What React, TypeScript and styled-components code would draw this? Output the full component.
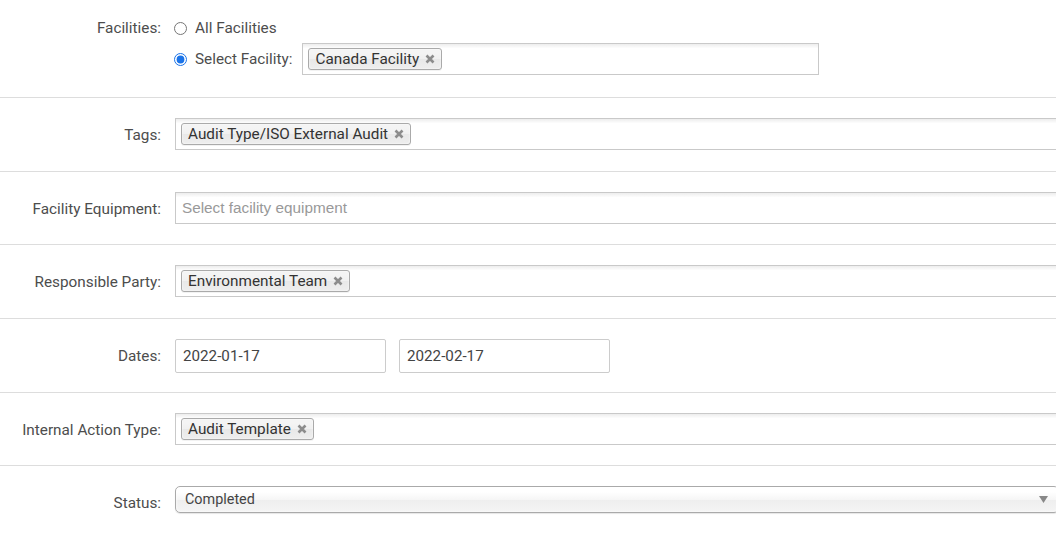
import React from "react";
import styled, { createGlobalStyle } from "styled-components";

const Global = createGlobalStyle`
  html, body { margin: 0; padding: 0; overflow: hidden; background: #fff; }
  body { font-family: Roboto, "Liberation Sans", Arial, sans-serif; }
`;

const Page = styled.div`
  width: 1056px;
  display: flex;
  flex-direction: column;
`;

const Row = styled.div<{ $first?: boolean; $last?: boolean }>`
  box-sizing: border-box;
  height: ${(p) => (p.$first ? "98px" : "73.7px")};
  padding-top: ${(p) => (p.$first ? "18px" : "20px")};
  display: grid;
  grid-template-columns: 161px 1fr;
  column-gap: 14px;
  align-items: start;
  border-bottom: ${(p) => (p.$last ? "none" : "1px solid #dddddd")};
`;

const Label = styled.div<{ $lh?: number }>`
  text-align: right;
  font-size: 15.3px;
  color: #4d4d4d;
  line-height: ${(p) => p.$lh ?? 32}px;
  padding-top: ${(p) => (p.$lh ? 0 : 1)}px;
  white-space: nowrap;
`;

const Control = styled.div`
  min-width: 0;
  display: flex;
  flex-direction: column;
  gap: 5px;
`;

const RadioLine = styled.label<{ $h: number }>`
  display: flex;
  align-items: center;
  height: ${(p) => p.$h}px;
  gap: 8px;
  font-size: 15.3px;
  color: #4d4d4d;
  white-space: nowrap;
`;

const Radio = styled.input`
  margin: 0 0 0 -1px;
  width: 13px;
  height: 13px;
  accent-color: #1a73e8;
`;

const SelectFacilityText = styled.span`
  margin-right: 2px;
`;

const MultiBox = styled.div<{ $width: number }>`
  box-sizing: border-box;
  width: ${(p) => p.$width}px;
  flex: none;
  height: 32px;
  border: 1px solid #c9c9c9;
  background: linear-gradient(#eeeeee 1%, #ffffff 15%);
  padding: 4px 5px;
  display: flex;
  align-items: flex-start;
  gap: 5px;
`;

const Chip = styled.span`
  box-sizing: border-box;
  height: 22px;
  display: inline-flex;
  align-items: center;
  gap: 6px;
  padding: 0 6px;
  border: 1px solid #aaaaaa;
  border-radius: 3px;
  background: linear-gradient(#f4f4f4 20%, #f0f0f0 50%, #e8e8e8 52%, #eeeeee 100%);
  box-shadow: 0 0 2px #fff inset, 0 1px 0 rgba(0, 0, 0, 0.05);
  font-size: 15.3px;
  color: #333333;
  white-space: nowrap;
`;

const Placeholder = styled.span`
  font-family: "Liberation Sans", Arial, sans-serif;
  font-size: 15.3px;
  color: #999999;
  line-height: 22px;
  padding-left: 1px;
`;

const DateRow = styled.div`
  display: flex;
  gap: 13px;
`;

const DateInput = styled.div`
  box-sizing: border-box;
  width: 211px;
  height: 34px;
  border: 1px solid #cccccc;
  border-radius: 2px;
  padding: 0 7px;
  display: flex;
  align-items: center;
  font-size: 15.2px;
  color: #444444;
`;

const SingleSelect = styled.div`
  box-sizing: border-box;
  width: 884px;
  height: 27px;
  border: 1px solid #aaaaaa;
  border-radius: 5px;
  background: linear-gradient(#ffffff 20%, #f6f6f6 50%, #eeeeee 52%, #f4f4f4 100%);
  box-shadow: 0 0 3px #fff inset, 0 1px 1px rgba(0, 0, 0, 0.1);
  padding: 0 10px 0 9px;
  display: flex;
  align-items: center;
  justify-content: space-between;
  font-size: 14.4px;
  color: #444444;
`;

const Close = () => (
  <svg width="10" height="10" viewBox="0 0 10 10" aria-hidden>
    <path d="M1.5 1.5 L8.5 8.5 M8.5 1.5 L1.5 8.5" stroke="#8c8c8c" strokeWidth="2.6" strokeLinecap="butt" />
  </svg>
);

const Arrow = () => (
  <svg width="9" height="7" viewBox="0 0 9 7" aria-hidden>
    <path d="M0 0 H9 L4.5 7 Z" fill="#888888" />
  </svg>
);

const Tag = ({ text }: { text: string }) => (
  <Chip>
    {text}
    <Close />
  </Chip>
);

export default function App() {
  return (
    <Page>
      <Global />
      <Row $first>
        <Label $lh={20}>Facilities:</Label>
        <Control>
          <RadioLine $h={20}>
            <Radio type="radio" name="fac" />
            All Facilities
          </RadioLine>
          <RadioLine $h={32}>
            <Radio type="radio" name="fac" defaultChecked />
            <SelectFacilityText>Select Facility:</SelectFacilityText>
            <MultiBox $width={517}>
              <Tag text="Canada Facility" />
            </MultiBox>
          </RadioLine>
        </Control>
      </Row>
      <Row>
        <Label>Tags:</Label>
        <MultiBox $width={900}>
          <Tag text="Audit Type/ISO External Audit" />
        </MultiBox>
      </Row>
      <Row>
        <Label>Facility Equipment:</Label>
        <MultiBox $width={900}>
          <Placeholder>Select facility equipment</Placeholder>
        </MultiBox>
      </Row>
      <Row>
        <Label>Responsible Party:</Label>
        <MultiBox $width={900}>
          <Tag text="Environmental Team" />
        </MultiBox>
      </Row>
      <Row>
        <Label>Dates:</Label>
        <DateRow>
          <DateInput>2022-01-17</DateInput>
          <DateInput>2022-02-17</DateInput>
        </DateRow>
      </Row>
      <Row>
        <Label>Internal Action Type:</Label>
        <MultiBox $width={900}>
          <Tag text="Audit Template" />
        </MultiBox>
      </Row>
      <Row $last>
        <Label>Status:</Label>
        <SingleSelect>
          Completed
          <Arrow />
        </SingleSelect>
      </Row>
    </Page>
  );
}
